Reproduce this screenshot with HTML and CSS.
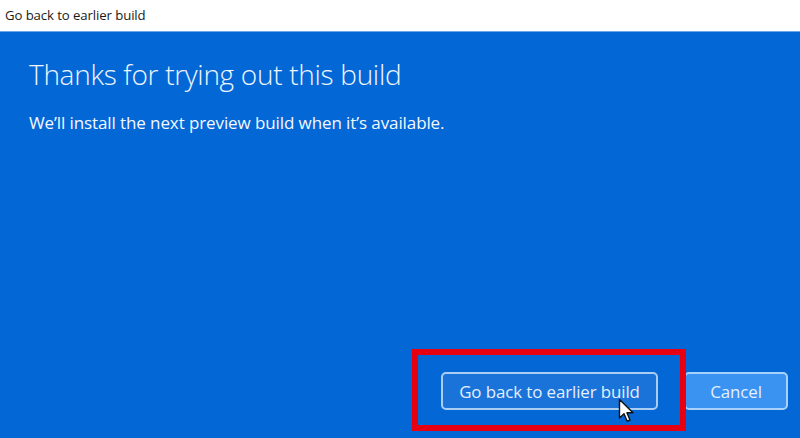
FILE: index.html
```html
<!DOCTYPE html>
<html>
<head>
<meta charset="utf-8">
<link rel="stylesheet" href="styles.css">
</head>
<body>
<div class="window">
  <div class="titlebar">Go back to earlier build</div>
  <div class="content">
    <h1 class="heading">Thanks for trying out this build</h1>
    <p class="subtitle">We’ll install the next preview build when it’s available.</p>
    <div class="spacer"></div>
    <div class="actions">
      <button class="btn btn-secondary">Go back to earlier build</button>
      <button class="btn btn-primary">Cancel</button>
    </div>
  </div>
  <div class="highlight"></div>
  <svg class="cursor" width="18" height="26" viewBox="0 0 18 26">
    <path d="M1.5 1.5 L1.5 20 L6 15.8 L9.2 23.2 L12 22 L8.9 14.8 L15 14.8 Z" fill="#fff" stroke="#111" stroke-width="1.4" stroke-linejoin="round"/>
  </svg>
</div>
</body>
</html>
```

FILE: styles.css
```css
* { box-sizing: border-box; }
html, body {
  margin: 0;
  padding: 0;
  width: 800px;
  height: 438px;
  overflow: hidden;
  font-family: "Open Sans", "Noto Sans", "Liberation Sans", sans-serif;
}
.window {
  position: relative;
  width: 800px;
  height: 438px;
  display: flex;
  flex-direction: column;
  background: #0467d6;
}
.titlebar {
  height: 32px;
  background: #ffffff;
  color: #1a1a1a;
  font-size: 13.2px;
  line-height: 30px;
  padding-left: 5px;
  letter-spacing: -0.1px;
  border-bottom: 1px solid #6fa6e6;
}
.content {
  flex: 1;
  display: flex;
  flex-direction: column;
  padding: 0 12px 28px 29px;
  color: #ffffff;
}
.heading {
  margin: 22px 0 0 0;
  font-weight: 300;
  font-size: 28px;
  line-height: 40px;
  letter-spacing: -0.3px;
  color: #eef5ff;
}
.subtitle {
  margin: 19px 0 0 0;
  font-size: 17px;
  line-height: 20px;
  color: #f4f8ff;
  letter-spacing: -0.1px;
}
.spacer { flex: 1; }
.actions {
  display: flex;
  justify-content: flex-end;
  gap: 26px;
}
.btn {
  height: 38px;
  border-radius: 5px;
  font-family: "Open Sans", "Noto Sans", "Liberation Sans", sans-serif;
  font-size: 16.9px;
  color: #e4efff;
  padding: 0;
  letter-spacing: -0.1px;
}
.btn-secondary {
  width: 217px;
  background: #1a73d9;
  border: 2px solid #a9cdf3;
}
.btn-primary {
  width: 104px;
  background: #3b93f1;
  border: 2px solid #a8d2fb;
}
.highlight {
  position: absolute;
  left: 412px;
  top: 349px;
  width: 274px;
  height: 82px;
  border: 6px solid #e60012;
}
.cursor {
  position: absolute;
  left: 618px;
  top: 398px;
}
```
